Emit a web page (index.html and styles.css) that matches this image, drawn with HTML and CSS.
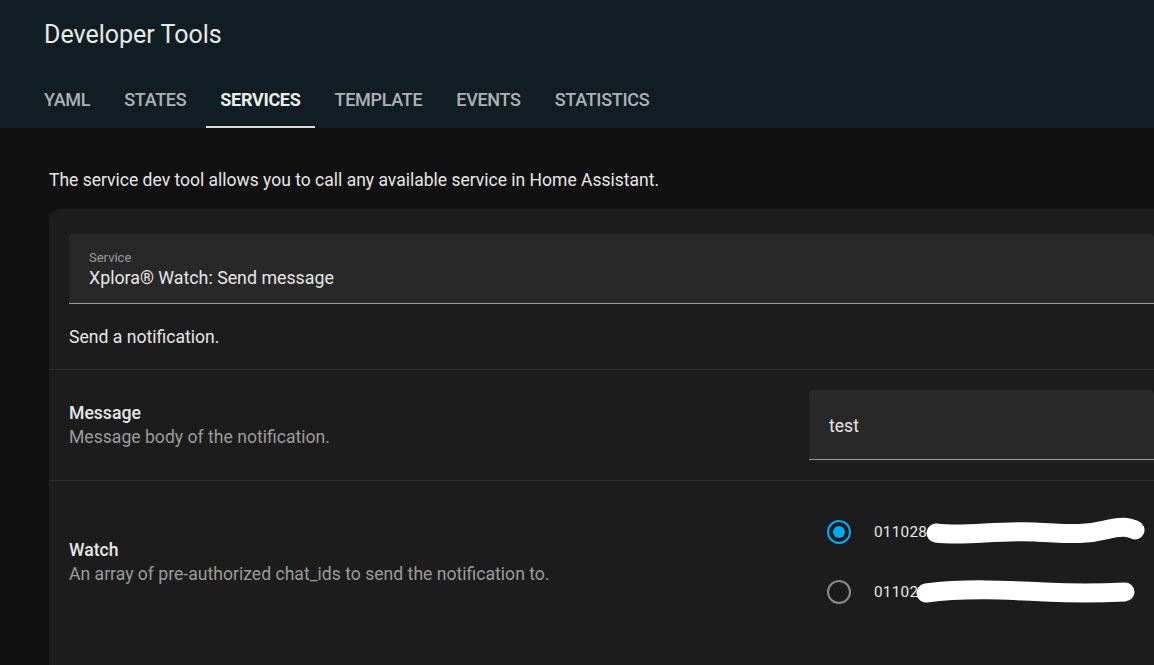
FILE: index.html
```html
<!DOCTYPE html>
<html>
<head>
<meta charset="utf-8">
<link rel="stylesheet" href="styles.css">
</head>
<body>
<header class="header">
  <div class="title-row">Developer Tools</div>
  <nav class="tabs">
    <div class="tab">YAML</div>
    <div class="tab">STATES</div>
    <div class="tab active">SERVICES</div>
    <div class="tab">TEMPLATE</div>
    <div class="tab">EVENTS</div>
    <div class="tab">STATISTICS</div>
  </nav>
</header>
<main class="content">
  <p class="intro">The service dev tool allows you to call any available service in Home Assistant.</p>
  <section class="card">
    <div class="service-block">
      <div class="field service-field">
        <div class="field-label">Service</div>
        <div class="field-value">Xplora® Watch: Send message</div>
      </div>
      <div class="service-desc">Send a notification.</div>
    </div>
    <div class="row">
      <div class="row-info">
        <div class="row-name">Message</div>
        <div class="row-desc">Message body of the notification.</div>
      </div>
      <div class="row-control">
        <div class="field text-field"><span class="field-text">test</span></div>
      </div>
    </div>
    <div class="row watch-row">
      <div class="row-info">
        <div class="row-name">Watch</div>
        <div class="row-desc">An array of pre-authorized chat_ids to send the notification to.</div>
      </div>
      <div class="row-control radios">
        <label class="radio-item">
          <span class="radio checked"><span class="dot"></span></span>
          <span class="radio-text">011028</span><svg class="redact r1" width="230" height="30" viewBox="0 0 230 30"><path d="M11 16 C 40 20, 70 13, 110 15 S 160 18, 180 13 S 205 11, 210 13" fill="none" stroke="#fff" stroke-width="19" stroke-linecap="round" stroke-linejoin="round"/></svg>
        </label>
        <label class="radio-item">
          <span class="radio"></span>
          <span class="radio-text">011028</span><svg class="redact r2" width="230" height="30" viewBox="0 0 230 30"><path d="M11 16 C 50 11, 90 13, 130 15 S 190 16, 210 15" fill="none" stroke="#fff" stroke-width="19" stroke-linecap="round"/></svg>
        </label>
      </div>
    </div>
  </section>
</main>
</body>
</html>
```
FILE: styles.css
```css
html, body {
  margin: 0;
  padding: 0;
  background: #111111;
  overflow: hidden;
  font-family: Roboto, "Noto Sans", sans-serif;
  color: #e1e1e1;
}
body {
  width: 1154px;
  height: 665px;
}
.header {
  background: #101e24;
  height: 128px;
  display: flex;
  flex-direction: column;
}
.title-row {
  height: 72px;
  display: flex;
  align-items: center;
  padding-left: 44px;
  padding-bottom: 3px;
  box-sizing: border-box;
  font-size: 25px;
  color: #e8e8e8;
}
.tabs {
  display: flex;
  height: 56px;
  padding-left: 27px;
}
.tab {
  padding: 0 14.5px 2px;
  margin: 0 2.5px;
  display: flex;
  align-items: center;
  font-size: 18px;
  font-weight: 500;
  color: #aeb2b5;
  letter-spacing: -0.3px;
  position: relative;
}
.tab.active {
  color: #ececec;
  font-weight: 700;
}
.tab.active::after {
  content: "";
  position: absolute;
  left: 0;
  right: 0;
  bottom: 0;
  height: 2px;
  background: #dcdcdc;
}
.content {
  padding: 0 0 0 49px;
}
.intro {
  margin: 0;
  height: 81px;
  padding-top: 40px;
  box-sizing: border-box;
  font-size: 17.5px;
  line-height: 24px;
  color: #e6e6e6;
}
.card {
  width: 1105px;
  background: #1c1c1c;
  border-radius: 12px 0 0 0;
  height: 456px;
  overflow: hidden;
}
.service-block {
  padding: 25px 0 0 20px;
  height: 161px;
  box-sizing: border-box;
  border-bottom: 1px solid #2f2f2f;
}
.field {
  background: #282828;
  border-bottom: 1px solid #9a9a9a;
  border-radius: 4px 4px 0 0;
  box-sizing: border-box;
}
.service-field {
  height: 70px;
  padding: 16px 20px 0 20px;
}
.field-label {
  font-size: 13px;
  color: #9b9b9b;
  line-height: 16px;
}
.field-value {
  font-size: 17.8px;
  line-height: 22px;
  margin-top: 1px;
  color: #e6e6e6;
}
.service-desc {
  font-size: 17.6px;
  padding-top: 22px;
  line-height: 22px;
  color: #e6e6e6;
}
.row {
  display: flex;
  border-bottom: 1px solid #2f2f2f;
  height: 111px;
  box-sizing: border-box;
  padding: 0 0 0 20px;
}
.row-info {
  width: 740px;
  flex: none;
  display: flex;
  flex-direction: column;
  justify-content: center;
}
.row-name {
  font-size: 17.6px;
  font-weight: 500;
  line-height: 24px;
  color: #e6e6e6;
}
.row-desc {
  font-size: 17.6px;
  line-height: 24px;
  color: #9b9b9b;
}
.row-control {
  flex: 1;
  min-width: 0;
  display: flex;
  align-items: center;
}
.text-field {
  width: 100%;
  height: 70px;
  display: flex;
  align-items: center;
  padding: 3px 0 0 20px;
  margin-top: -1px;
}
.field-text {
  font-size: 17.6px;
  color: #e6e6e6;
}
.watch-row {
  border-bottom: none;
  height: 164px;
  padding-bottom: 2px;
}
.radios {
  flex-direction: column;
  align-items: flex-start;
  justify-content: flex-start;
  padding-top: 39px;
  gap: 36px;
  padding-left: 18px;
}
.radio-item {
  display: flex;
  align-items: center;
  height: 24px;
}
.radio {
  width: 24px;
  height: 24px;
  flex: none;
  border-radius: 50%;
  border: 2px solid #8a8a8a;
  box-sizing: border-box;
  display: flex;
  align-items: center;
  justify-content: center;
}
.radio.checked {
  border-color: #03a9f4;
}
.dot {
  width: 12px;
  height: 12px;
  border-radius: 50%;
  background: #03a9f4;
}
.radio-text {
  margin-left: 23px;
  font-size: 15.4px;
  color: #e6e6e6;
  letter-spacing: 0.2px;
}
.redact {
  flex: none;
}
.r1 {
  margin-left: -2px;
}
.r2 {
  margin-left: -12px;
}
```
